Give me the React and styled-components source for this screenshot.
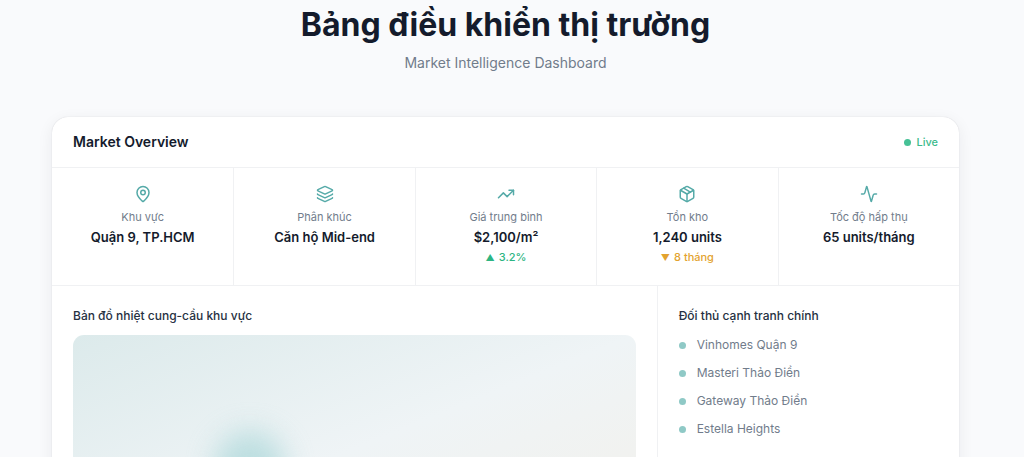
import React from "react";
import styled, { createGlobalStyle } from "styled-components";
import { Activity, Layers, MapPin, Package, TrendingUp } from "lucide-react";

const GlobalStyle = createGlobalStyle`
	* {
		box-sizing: border-box;
	}
	body {
		margin: 0;
		background: #f9fafc;
		color: #141b2c;
		font-family: Inter, "Noto Sans", sans-serif;
	}
	h1, h2, h3, p, ul, dl, dd {
		margin: 0;
		padding: 0;
	}
`;

const Page = styled.main`
	padding: 5px 65px 56px 52px;
`;

const Heading = styled.header`
	margin-bottom: 44px;
	text-align: center;
`;

const Title = styled.h1`
	font-size: 32px;
	font-weight: 700;
	line-height: 40px;
`;

const Subtitle = styled.p`
	margin-top: 7px !important;
	color: #717c8b;
	font-size: 14px;
	line-height: 21px;
`;

const Card = styled.section`
	overflow: hidden;
	border-radius: 16px;
	background: #fff;
	box-shadow: 0 0 1px rgba(20, 27, 44, 0.2), 0 4px 16px rgba(20, 27, 44, 0.07);
`;

const CardHeader = styled.div`
	display: flex;
	align-items: center;
	justify-content: space-between;
	height: 51px;
	padding: 0 21px;
	border-bottom: 1px solid #f0f1f3;
`;

const CardTitle = styled.h2`
	font-size: 14px;
	font-weight: 600;
	line-height: 22px;
`;

const Live = styled.span`
	display: flex;
	align-items: center;
	gap: 5px;
	color: #3cba8b;
	font-size: 11px;
	font-weight: 500;
	line-height: 16px;
`;

const Dot = styled.span`
	flex: none;
	width: 7px;
	height: 7px;
	border-radius: 50%;
	background: ${({ $color }) => $color};
`;

const Metrics = styled.dl`
	display: grid;
	grid-template-columns: repeat(5, 1fr);
	border-bottom: 1px solid #f0f1f3;
`;

const Metric = styled.div`
	display: flex;
	flex-direction: column;
	align-items: center;
	min-height: 117px;
	padding: 17px 16px;
	text-align: center;

	& + & {
		border-left: 1px solid #f0f1f3;
	}
	svg {
		color: #55aaa8;
	}
`;

const MetricLabel = styled.dt`
	margin-top: 6px;
	color: #727d8c;
	font-size: 11px;
	line-height: 16px;
`;

const MetricValue = styled.dd`
	margin-top: 2px !important;
	font-size: 13px;
	font-weight: 600;
	line-height: 20px;
`;

const MetricTrend = styled.dd`
	display: flex;
	align-items: baseline;
	gap: 4px;
	margin-top: 2px !important;
	color: ${({ $up }) => ($up ? "#2db583" : "#e3a32f")};
	font-size: 11px;
	font-weight: 500;
	line-height: 16px;
`;

const Arrow = styled.span`
	font-size: 9px;
`;

const Details = styled.div`
	display: grid;
	grid-template-columns: 2fr 1fr;
`;

const Panel = styled.div`
	padding: 21px;

	& + & {
		border-left: 1px solid #f0f1f3;
	}
`;

const PanelTitle = styled.h3`
	color: #263142;
	font-size: 12px;
	font-weight: 500;
	line-height: 18px;
`;

const HeatMap = styled.div`
	position: relative;
	height: 228px;
	margin-top: 10px;
	overflow: hidden;
	border-radius: 11px;
	background: linear-gradient(to bottom right, #dceaeb, #eff4f6 50%, #f3f0ea);
`;

const HeatSpot = styled.span`
	position: absolute;
	top: 42%;
	left: 25%;
	width: 72px;
	height: 72px;
	border-radius: 50%;
	background: #a9d6d8;
	opacity: 0.7;
	filter: blur(14px);
`;

const Rivals = styled.ul`
	display: flex;
	flex-direction: column;
	gap: 8px;
	margin-top: 10px !important;
	list-style: none;
`;

const Rival = styled.li`
	display: flex;
	align-items: center;
	gap: 11px;
	color: #717c8b;
	font-size: 12px;
	line-height: 20px;
`;

const metrics = [
	{ icon: MapPin, label: "Khu vực", value: "Quận 9, TP.HCM" },
	{ icon: Layers, label: "Phân khúc", value: "Căn hộ Mid-end" },
	{ icon: TrendingUp, label: "Giá trung bình", value: "$2,100/m²", trend: "3.2%", up: true },
	{ icon: Package, label: "Tồn kho", value: "1,240 units", trend: "8 tháng" },
	{ icon: Activity, label: "Tốc độ hấp thụ", value: "65 units/tháng" },
];

const rivals = ["Vinhomes Quận 9", "Masteri Thảo Điền", "Gateway Thảo Điền", "Estella Heights"];

const App = () => {
	return (
		<>
			<GlobalStyle />
			<Page>
				<Heading>
					<Title>Bảng điều khiển thị trường</Title>
					<Subtitle>Market Intelligence Dashboard</Subtitle>
				</Heading>

				<Card>
					<CardHeader>
						<CardTitle>Market Overview</CardTitle>
						<Live>
							<Dot $color="#46c196" />
							Live
						</Live>
					</CardHeader>

					<Metrics>
						{metrics.map(({ icon: Icon, label, value, trend, up }) => (
							<Metric key={label}>
								<Icon size={18} aria-hidden="true" />
								<MetricLabel>{label}</MetricLabel>
								<MetricValue>{value}</MetricValue>
								{trend && (
									<MetricTrend $up={up}>
										<Arrow>{up ? "▲" : "▼"}</Arrow>
										{trend}
									</MetricTrend>
								)}
							</Metric>
						))}
					</Metrics>

					<Details>
						<Panel>
							<PanelTitle>Bản đồ nhiệt cung-cầu khu vực</PanelTitle>
							<HeatMap>
								<HeatSpot />
							</HeatMap>
						</Panel>
						<Panel>
							<PanelTitle>Đối thủ cạnh tranh chính</PanelTitle>
							<Rivals>
								{rivals.map((name) => (
									<Rival key={name}>
										<Dot $color="#8fc9c6" />
										{name}
									</Rival>
								))}
							</Rivals>
						</Panel>
					</Details>
				</Card>
			</Page>
		</>
	);
};

export default App;
